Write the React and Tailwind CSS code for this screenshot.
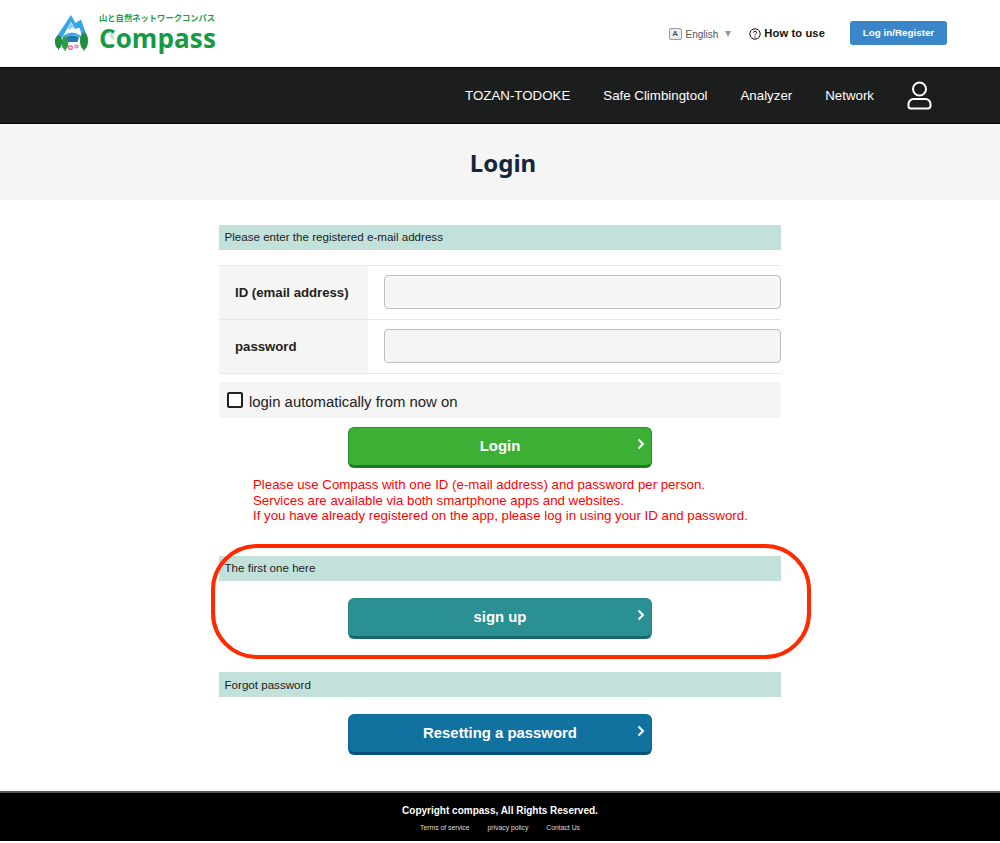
import React from "react";

const Section = ({ children, className = "", textClass = "leading-[24px]" }) => (
  <div className={`h-[25px] bg-[#c2e1da] pl-[5.5px] text-[11.6px] text-[#222] ${textClass} ${className}`}>{children}</div>
);

const Btn = ({ children, bg, edge, className = "" }) => (
  <div
    className={`relative mx-auto h-[41px] w-[304px] rounded-[6px] border border-b-[3px] text-center text-[14.9px] font-bold leading-[36px] text-white ${bg} ${edge} ${className}`}
  >
    {children}
    <svg className="absolute right-[6px] top-[10px]" width="8" height="12" viewBox="0 0 8 12" fill="none">
      <path d="M1.5 1.5 L6 6 L1.5 10.5" stroke="#fff" strokeWidth="2" />
    </svg>
  </div>
);

const Logo = () => (
  <div className="flex items-center">
    <svg width="37" height="38" viewBox="0 0 37 38" className="mr-[9px] mt-[-4px]">
      <path d="M2 26 L18 2 L22.5 10 L28 6.5 L35 26 L30 27 L26.5 15 L22 16 L18 9 L8 27 Z" fill="#3aa5e4" />
      <path d="M18 9 L22 16 L26.5 15 L30 27 L8 27 Z" fill="#ffffff" />
      <path d="M14.5 15.5 L18 9 L22 16 L19 14.5 L17 16.5 Z" fill="#8fd0f2" />
      <path d="M10 23 Q19 16 28 23 L28 25 Q19 19 10 25 Z" fill="#3aa5e4" />
      <path d="M12 24 Q19 20.5 26 24 L24.5 29 L13.5 29 Z" fill="#1f78b4" />
      <ellipse cx="5.5" cy="29" rx="3.6" ry="6.5" fill="#1f8f3e" />
      <ellipse cx="12" cy="30" rx="3.4" ry="6.5" fill="#2d9c48" />
      <ellipse cx="31" cy="28" rx="4" ry="8.5" fill="#1f8f3e" />
      <rect x="5.1" y="34" width="0.9" height="3" fill="#2d7d3a" />
      <rect x="11.6" y="35" width="0.9" height="3" fill="#2d7d3a" />
      <rect x="30.6" y="35" width="0.9" height="3" fill="#2d7d3a" />
      <circle cx="17.5" cy="34.5" r="2.6" fill="#ee6fa0" />
      <circle cx="17.5" cy="34.5" r="1" fill="#fff" />
      <circle cx="23.5" cy="33.5" r="2.1" fill="#ee6fa0" />
      <circle cx="23.5" cy="33.5" r="0.8" fill="#fff" />
    </svg>
    <div className="relative mt-[-2px] flex flex-col">
      <span className="whitespace-nowrap text-[8.3px] font-bold leading-[11px] text-[#1d9c47] [font-family:'Noto_Sans_CJK_JP',sans-serif]">
        山と自然ネットワークコンパス
      </span>
      <span className="text-[26px] font-bold leading-[30px] tracking-[0.1px] text-[#159a45] [font-family:'Open_Sans',sans-serif]">
        Compass
      </span>
      <svg className="absolute left-[9px] top-[18px]" width="7" height="11" viewBox="0 0 7 11" fill="none">
        <path d="M1 1 Q6 3 6 10 Q1 8 1 1 Z" fill="#bfe6c8" />
      </svg>
    </div>
  </div>
);

export default function App() {
  return (
    <div className="relative h-[843px] overflow-hidden bg-white [font-family:'Liberation_Sans',Arial,sans-serif]">
      <header className="flex h-[67px] items-center justify-between pl-[53px] pr-[53px]">
        <Logo />
        <div className="flex items-center">
          <span className="flex h-[12px] w-[13px] items-center justify-center rounded-[2px] border border-[#999] bg-[#eee] text-[8px] font-bold leading-none text-[#555]">A</span>
          <span className="ml-[4px] mt-[2px] text-[10px] text-[#555]">English</span>
          <span className="ml-[7px] h-0 w-0 border-x-[3.5px] border-t-[6px] border-x-transparent border-t-[#999]" />
          <svg className="ml-[18px]" width="12" height="12" viewBox="0 0 12 12" fill="none">
            <circle cx="6" cy="6" r="5.2" stroke="#111" strokeWidth="1" />
            <path d="M4.4 4.6 C4.4 2.8 7.6 2.8 7.6 4.6 C7.6 5.8 6 5.7 6 7.2" stroke="#111" strokeWidth="1" />
            <circle cx="6" cy="8.9" r="0.7" fill="#111" />
          </svg>
          <span className="ml-[3px] text-[11.2px] font-bold tracking-[0.1px] text-[#111]">How to use</span>
          <span className="ml-[25px] mt-[-1px] flex h-[24px] w-[97px] items-center justify-center rounded-[3px] bg-[#3b86c8] text-[9.8px] font-bold text-white">Log in/Register</span>
        </div>
      </header>

      <nav className="flex h-[57px] items-center justify-end border-y border-[#000] bg-[#1c1e1e] pr-[68px] text-[13.3px] text-white">
        <span className="mr-[33px]">TOZAN-TODOKE</span>
        <span className="mr-[33px]">Safe Climbingtool</span>
        <span className="mr-[33px]">Analyzer</span>
        <span className="mr-[33px]">Network</span>
        <svg width="25" height="29" viewBox="0 0 25 29" fill="none" stroke="#fff" strokeWidth="2">
          <circle cx="12.5" cy="8" r="6.5" />
          <path d="M6.5 18 H18.5 A5 5 0 0 1 23.5 23 V25 A2.5 2.5 0 0 1 21 27.5 H4 A2.5 2.5 0 0 1 1.5 25 V23 A5 5 0 0 1 6.5 18 Z" />
        </svg>
      </nav>

      <div className="flex h-[76px] items-center justify-center bg-[#f5f5f5] pl-[6px] pt-[2px] text-[24px] font-bold text-[#14263e] [font-family:'Noto_Sans',sans-serif]">
        Login
      </div>

      <main className="mx-auto w-[562px] pt-[25px]">
        <Section>Please enter the registered e-mail address</Section>

        <div className="mt-[15px] border-t border-[#e8e8e8]">
          <div className="flex h-[54px] border-b border-[#e8e8e8]">
            <div className="flex w-[149px] items-center bg-[#f5f5f5] pl-[16px] text-[13.2px] font-bold text-[#222]">ID (email address)</div>
            <div className="flex flex-1 items-center pb-[2px] pl-[16px]">
              <div className="h-[34px] w-full rounded-[4px] border border-[#bdbdbd] bg-[#f5f5f5]" />
            </div>
          </div>
          <div className="flex h-[54px] border-b border-[#e8e8e8]">
            <div className="flex w-[149px] items-center bg-[#f5f5f5] pl-[16px] text-[13.2px] font-bold text-[#222]">password</div>
            <div className="flex flex-1 items-center pb-[2px] pl-[16px]">
              <div className="h-[34px] w-full rounded-[4px] border border-[#bdbdbd] bg-[#f5f5f5]" />
            </div>
          </div>
        </div>

        <div className="mt-[8px] flex h-[36px] items-center bg-[#f5f5f5] pl-[8px] text-[14.9px] text-[#222]">
          <span className="h-[16px] w-[16px] rounded-[2px] border-2 border-[#222] bg-white" />
          <span className="ml-[6px] mt-[4px]">login automatically from now on</span>
        </div>

        <Btn bg="bg-[#3cb034]" edge="border-[#2a9128] border-b-[#1d7a22]" className="mt-[9px]">Login</Btn>

        <div className="mt-[9px] pl-[34px] text-[13.27px] leading-[15.5px] text-[#ff0000]">
          <p>Please use Compass with one ID (e-mail address) and password per person.</p>
          <p>Services are available via both smartphone apps and websites.</p>
          <p>If you have already registered on the app, please log in using your ID and password.</p>
        </div>

        <Section className="mt-[32px]">The first one here</Section>
        <Btn bg="bg-[#2a9094]" edge="border-[#26888c] border-b-[#17686c]" className="mt-[17px]">sign up</Btn>

        <Section className="mt-[33px]" textClass="leading-[26px]">Forgot password</Section>
        <Btn bg="bg-[#11729f]" edge="border-[#106a96] border-b-[#0b4f78]" className="mt-[17px]">Resetting a password</Btn>
      </main>

      <footer className="mt-[36px] h-[50px] border-t-2 border-[#555] bg-black text-center text-white">
        <p className="pt-[11px] text-[10px] font-bold leading-[14px]">Copyright compass, All Rights Reserved.</p>
        <div className="mt-[5px] flex justify-center gap-[18px] text-[6.8px] leading-[10px] text-[#ddd]">
          <span>Terms of service</span>
          <span>privacy policy</span>
          <span>Contact Us</span>
        </div>
      </footer>

      <div className="pointer-events-none absolute left-[211px] top-[544px] h-[115px] w-[600px] rounded-[46px] border-[4px] border-[#ff2a00]" />
    </div>
  );
}
